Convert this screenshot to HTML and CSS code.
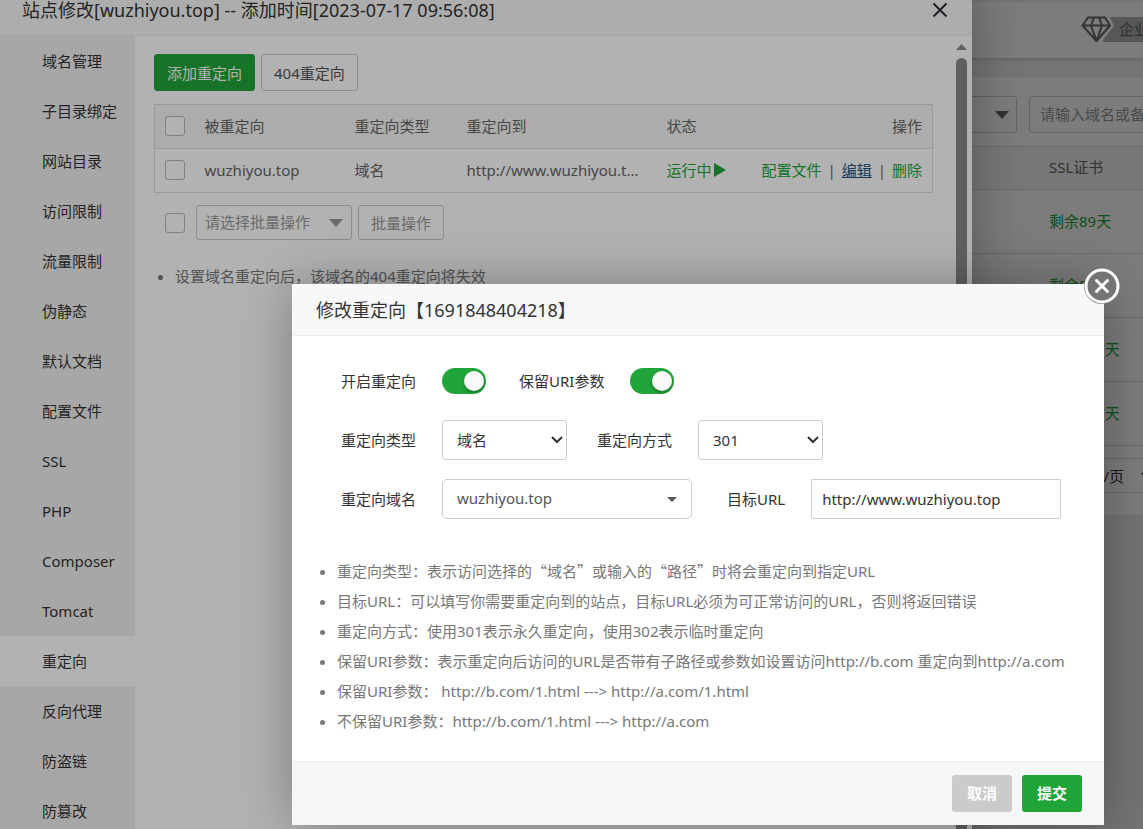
FILE: index.html
```html
<!DOCTYPE html>
<html lang="zh-CN">
<head>
<meta charset="utf-8">
<title>站点修改</title>
<link rel="stylesheet" href="styles.css">
</head>
<body>
<div class="site">
  <header class="site-header">
    <div class="edition">
      <svg class="edition-gem" viewBox="0 0 42 26" width="42" height="26" aria-hidden="true">
        <path class="gem-flag" d="M29 1H42V26H22L22 24L33 10Z"/>
        <path class="gem-line" d="M7 1.500H24L29 9.500L15.500 25L1.500 9.500ZM1.500 9.500H29M10 9.500L15.500 25L21 9.500M13 1.500L10 9.500M18 1.500L21 9.500"/>
      </svg>
      <span class="edition-name">企业</span>
    </div>
  </header>
  <main class="site-panel">
    <div class="site-tools">
      <button class="site-category" type="button" aria-label="分类"><svg viewBox="0 0 14 8" width="14" height="8"><path d="M0 0H14L7 8Z"/></svg></button>
      <input class="site-search" type="text" placeholder="请输入域名或备注" aria-label="搜索">
    </div>
    <table class="site-table">
      <thead><tr><th>SSL证书</th></tr></thead>
      <tbody>
        <tr><td>剩余89天</td></tr>
        <tr><td>剩余89天</td></tr>
        <tr><td>剩余357天</td></tr>
        <tr><td>剩余357天</td></tr>
      </tbody>
    </table>
    <div class="site-pages">
      <span>20条/页</span>
      <svg viewBox="0 0 12 8" width="12" height="8" aria-hidden="true"><path class="chevron" d="M1 1L6 6L11 1"/></svg>
    </div>
  </main>
</div>
<div class="shade"></div>

<section class="window" aria-label="站点修改">
  <header class="window-title">
    <h1 class="title-text">站点修改[wuzhiyou.top] -- 添加时间[2023-07-17 09:56:08]</h1>
    <button class="window-close" type="button" aria-label="关闭"><svg viewBox="0 0 16 16" width="16" height="16"><path d="M1.500 1.500L14.500 14.500M14.500 1.500L1.500 14.500"/></svg></button>
  </header>
  <div class="window-body">
    <nav class="menu">
      <a class="menu-item" href="#">域名管理</a>
      <a class="menu-item" href="#">子目录绑定</a>
      <a class="menu-item" href="#">网站目录</a>
      <a class="menu-item" href="#">访问限制</a>
      <a class="menu-item" href="#">流量限制</a>
      <a class="menu-item" href="#">伪静态</a>
      <a class="menu-item" href="#">默认文档</a>
      <a class="menu-item" href="#">配置文件</a>
      <a class="menu-item" href="#">SSL</a>
      <a class="menu-item" href="#">PHP</a>
      <a class="menu-item" href="#">Composer</a>
      <a class="menu-item" href="#">Tomcat</a>
      <a class="menu-item menu-item-on" href="#">重定向</a>
      <a class="menu-item" href="#">反向代理</a>
      <a class="menu-item" href="#">防盗链</a>
      <a class="menu-item" href="#">防篡改</a>
    </nav>
    <div class="content">
      <div class="actions">
        <button class="btn btn-green" type="button">添加重定向</button>
        <button class="btn" type="button">404重定向</button>
      </div>
      <table class="rules">
        <colgroup><col class="c-check"><col class="c-from"><col class="c-type"><col class="c-to"><col class="c-state"><col></colgroup>
        <thead>
          <tr>
            <th><input class="check" type="checkbox" aria-label="全选"></th>
            <th>被重定向</th><th>重定向类型</th><th>重定向到</th><th>状态</th><th class="ops">操作</th>
          </tr>
        </thead>
        <tbody>
          <tr>
            <td><input class="check" type="checkbox" aria-label="选择 wuzhiyou.top"></td>
            <td>wuzhiyou.top</td>
            <td>域名</td>
            <td>http://www.wuzhiyou.t...</td>
            <td><a class="link state" href="#">运行中<svg viewBox="0 0 12 14" width="12" height="14"><path d="M0 0L12 7L0 14Z"/></svg></a></td>
            <td class="ops"><a class="link" href="#">配置文件</a><span class="bar">|</span><a class="link link-edit" href="#">编辑</a><span class="bar">|</span><a class="link" href="#">删除</a></td>
          </tr>
        </tbody>
      </table>
      <div class="batch">
        <input class="check" type="checkbox" aria-label="全选批量">
        <div class="pick pick-batch">
          <select aria-label="批量操作类型"><option>请选择批量操作</option></select>
          <svg viewBox="0 0 14 8" width="14" height="8"><path d="M0 0H14L7 8Z"/></svg>
        </div>
        <button class="btn btn-batch" type="button">批量操作</button>
      </div>
      <ul class="notes">
        <li>设置域名重定向后，该域名的404重定向将失效</li>
      </ul>
    </div>
    <div class="scroll">
      <svg viewBox="0 0 11 6" width="11" height="6"><path d="M0 6L5.500 0L11 6Z"/></svg>
      <div class="scroll-thumb"></div>
    </div>
  </div>
</section>
<div class="shade"></div>

<section class="dialog" role="dialog" aria-label="修改重定向">
  <header class="dialog-title"><h2 class="title-text">修改重定向【1691848404218】</h2></header>
  <button class="dialog-close" type="button" aria-label="关闭">
    <svg viewBox="0 0 36 36" width="36" height="36"><circle cx="18" cy="18" r="16"/><path d="M12.500 12.500L23.500 23.500M23.500 12.500L12.500 23.500"/></svg>
  </button>
  <form class="dialog-body">
    <div class="row row-toggle">
      <div class="field"><label for="on">开启重定向</label><input class="toggle" id="on" type="checkbox" checked></div>
      <div class="field"><label for="uri">保留URI参数</label><input class="toggle" id="uri" type="checkbox" checked></div>
    </div>
    <div class="row">
      <div class="field"><label for="type">重定向类型</label>
        <div class="pick pick-short"><select id="type"><option>域名</option></select><svg viewBox="0 0 12 8" width="12" height="8"><path class="chevron" d="M1 1L6 6L11 1"/></svg></div>
      </div>
      <div class="field"><label for="mode">重定向方式</label>
        <div class="pick pick-short"><select id="mode"><option>301</option></select><svg viewBox="0 0 12 8" width="12" height="8"><path class="chevron" d="M1 1L6 6L11 1"/></svg></div>
      </div>
    </div>
    <div class="row row-wide">
      <div class="field"><label for="domain">重定向域名</label>
        <div class="pick pick-long"><select id="domain"><option>wuzhiyou.top</option></select><svg viewBox="0 0 10 5" width="10" height="5"><path d="M0 0H10L5 5Z"/></svg></div>
      </div>
      <div class="field"><label for="url">目标URL</label><input class="text" id="url" type="text" value="http://www.wuzhiyou.top"></div>
    </div>
    <ul class="notes dialog-notes">
      <li>重定向类型：表示访问选择的<span class="quoted">“域名”</span>或输入的<span class="quoted">“路径”</span>时将会重定向到指定URL</li>
      <li>目标URL：可以填写你需要重定向到的站点，目标URL必须为可正常访问的URL，否则将返回错误</li>
      <li>重定向方式：使用301表示永久重定向，使用302表示临时重定向</li>
      <li>保留URI参数：表示重定向后访问的URL是否带有子路径或参数如设置访问http://b.com 重定向到http://a.com</li>
      <li>保留URI参数： http://b.com/1.html ---&gt; http://a.com/1.html</li>
      <li>不保留URI参数：http://b.com/1.html ---&gt; http://a.com</li>
    </ul>
  </form>
  <footer class="dialog-foot">
    <button class="foot-btn" type="button">取消</button>
    <button class="foot-btn foot-btn-ok" type="button">提交</button>
  </footer>
</section>
</body>
</html>
```
FILE: styles.css
```css
* { box-sizing: border-box; }
html, body { height: 100%; }
body {
  margin: 0;
  overflow: hidden;
  position: relative;
  background: #f0f0f0;
  color: #333;
  font: 15px/20px "Noto Sans", "Noto Sans CJK SC", sans-serif;
}
button, input, select { font: inherit; color: inherit; margin: 0; }
button { cursor: pointer; }
h1, h2, ul { margin: 0; padding: 0; }
h1, h2 { font-weight: 400; }
a { text-decoration: none; color: inherit; }
svg { display: block; }

.shade { position: absolute; inset: 0; background: rgba(0, 0, 0, .3); }

/* Site list behind the windows */
.site { display: flex; flex-direction: column; overflow: hidden; }
.site-header {
  display: flex;
  justify-content: flex-end;
  height: 58px;
  padding-top: 14px;
  background: #fff;
  border-top: 2px solid #eee;
  box-shadow: 0 1px 4px rgba(0, 0, 0, .2);
  overflow: hidden;
  flex: none;
}
.edition { display: flex; margin-right: -6px; height: 26px; }
.edition-gem { margin-right: -4px; }
.gem-flag { fill: #b4b4b4; }
.gem-line { fill: none; stroke: #6a6a6a; stroke-width: 2; stroke-linejoin: round; }
.edition-name { height: 25px; margin-top: 1px; line-height: 24px; background: #b4b4b4; color: #6a6a6a; font-weight: 500; }
.site-panel { margin-top: 19px; background: #fff; padding: 19px 0 22px; }
.site-tools { display: flex; justify-content: flex-end; gap: 12px; margin-right: -136px; }
.site-category {
  display: flex; align-items: center; justify-content: flex-end;
  width: 160px; height: 37px; padding: 0 7px;
  background: none; border: 1px solid #ccc; border-radius: 3px;
}
.site-category svg { fill: #666; }
.site-search {
  width: 250px; height: 37px; padding: 0 10px 2px;
  border: 1px solid #ccc; border-radius: 3px; background: none;
}
.site-search::placeholder { color: #999; }
.site-table { width: 100%; margin-top: 13px; border-collapse: collapse; }
.site-table th, .site-table td {
  padding: 0 0 2px calc(100% - 94px);
  border-top: 1px solid #ddd;
  font-weight: 400; text-align: left;
}
.site-table th { height: 43px; background: #f6f6f6; color: #666; }
.site-table td { height: 64px; color: #20a53a; }
.site-table tbody { border-bottom: 1px solid #ddd; }
.site-pages {
  display: flex; align-items: center; justify-content: flex-end; gap: 17px;
  height: 35px; margin: 12px -10px 0 0;
  border: 1px solid #ddd; border-width: 1px 0;
}
.chevron { fill: none; stroke: #333; stroke-width: 2; }

/* Site window */
.window {
  position: absolute; inset: -16px 171px -16px 0;
  display: flex; flex-direction: column;
  background: #fff;
  box-shadow: 1px 1px 50px rgba(0, 0, 0, .3);
}
.window-title, .dialog-title {
  display: flex; align-items: center; justify-content: space-between;
  height: 52px; flex: none;
  background: #f8f8f8; border-bottom: 1px solid #eee;
}
.window-title { padding: 0 24px 0 22px; }
.title-text { font-size: 18px; line-height: 26px; white-space: nowrap; }
.window-close { border: 0; padding: 0; background: none; }
.window-close svg { fill: none; stroke: #2e2d3c; stroke-width: 2; }
.window-body { display: flex; flex: 1; min-height: 0; overflow: hidden; }
.menu { width: 135px; flex: none; background: #f0f0f1; }
.menu-item { display: block; height: 50px; padding-left: 42px; line-height: 50px; }
.menu-item-on { background: #fff; }
.content { flex: 1; min-width: 0; padding: 18px 19px 0 19px; }
.actions { display: flex; gap: 6px; }
.btn {
  height: 37px; padding: 0 12px;
  border: 1px solid #ccc; border-radius: 3px; background: #fff; color: #555;
  white-space: nowrap;
}
.btn-green { background: #20a53a; border-color: #20a53a; color: #fff; }
.rules {
  width: 100%; margin-top: 13px; table-layout: fixed; border-collapse: collapse;
  border: 1px solid #ddd; color: #666;
}
.rules th, .rules td { height: 44px; padding: 0 10px 2px; text-align: left; font-weight: 400; white-space: nowrap; }
.rules th { background: #f6f6f6; border-bottom: 1px solid #ddd; }
.rules .ops { text-align: right; padding-left: 0; }
.c-check { width: 40px; }
.c-from { width: 150px; }
.c-type { width: 112px; }
.c-to { width: 200px; }
.c-state { width: 82px; }
.check {
  display: block; appearance: none; width: 20px; height: 20px;
  border: 1px solid #bbb; border-radius: 3px; background: #fff;
}
.link { color: #20a53a; }
.link-edit { color: #23527c; text-decoration: underline; }
.bar { margin: 0 6px; }
.state { display: flex; align-items: center; gap: 2px; }
.state svg { fill: #20a53a; flex: none; }
.batch { display: flex; align-items: center; margin-top: 12px; padding-left: 11px; }
.btn-batch { height: 35px; margin-left: 6px; color: #999; }

.pick { display: grid; align-items: center; }
.pick > * { grid-area: 1 / 1; }
.pick svg { justify-self: end; pointer-events: none; }
.pick select {
  appearance: none; width: 100%; height: 40px; padding: 0 14px;
  border: 1px solid #ccc; border-radius: 3px; background: #fff;
}
.pick-batch { width: 156px; margin-left: 11px; color: #999; }
.pick-batch select { height: 35px; padding: 0 8px 2px; }
.pick-batch svg { margin-right: 9px; fill: #999; }
.pick-short { width: 125px; }
.pick-short svg { margin-right: 4px; }
.pick-long { width: 250px; }
.pick-long select { border-radius: 5px; padding-bottom: 2px; color: #555; }
.pick-long svg { margin-right: 15px; fill: #555; }

.notes { margin-top: 21px; padding-left: 21px; color: #777; line-height: 30px; white-space: nowrap; }
.quoted { font-family: "Noto Sans CJK SC", sans-serif; }

.scroll { display: flex; flex-direction: column; align-items: center; gap: 8px; width: 20px; flex: none; padding: 8px 1px 0 0; }
.scroll svg { fill: #8a8a8a; }
.scroll-thumb { width: 11px; flex: 1; border-radius: 6px; background: #8a8a8a; }

/* Redirect dialog */
.dialog {
  position: absolute; top: 284px; left: 292px; right: 39px;
  background: #fff;
  box-shadow: 1px 1px 50px rgba(0, 0, 0, .3);
}
.dialog-title { padding: 0 24px; }
.dialog-close { position: absolute; top: -16px; right: -16px; padding: 0; border: 0; border-radius: 50%; background: #757575; }
.dialog-close svg { fill: none; stroke: #fff; stroke-width: 3; stroke-linecap: round; }
.dialog-body { padding: 32px 24px 25px; }
.row { display: flex; gap: 30px; padding-left: 25px; margin-bottom: 19px; }
.row-toggle { gap: 33px; margin-bottom: 26px; }
.row-wide { gap: 35px; margin-bottom: 37px; }
.field { display: flex; align-items: center; gap: 26px; }
.field label { white-space: nowrap; }
.toggle {
  display: flex; align-items: center; justify-content: flex-end;
  appearance: none; width: 44px; height: 26px; padding: 2px;
  border-radius: 13px; background: #20a53a;
}
.toggle::before { content: ""; width: 20px; height: 20px; border-radius: 50%; background: #fafafa; box-shadow: 0 2px 3px rgba(0, 0, 0, .3); }
.text { width: 250px; height: 40px; padding: 0 10px; border: 1px solid #ccc; border-radius: 2px; background: #fff; }
.dialog-notes { margin-top: 0; }
.dialog-foot {
  display: flex; justify-content: flex-end; gap: 10px;
  padding: 13px 22px;
  background: #f5f7f7; border-top: 1px solid #edf1f0;
}
.foot-btn { width: 60px; height: 37px; padding: 0 0 2px; border: 0; border-radius: 3px; background: #cbcbcb; color: #fff; font-weight: 700; }
.foot-btn-ok { background: #20a53a; }
```
